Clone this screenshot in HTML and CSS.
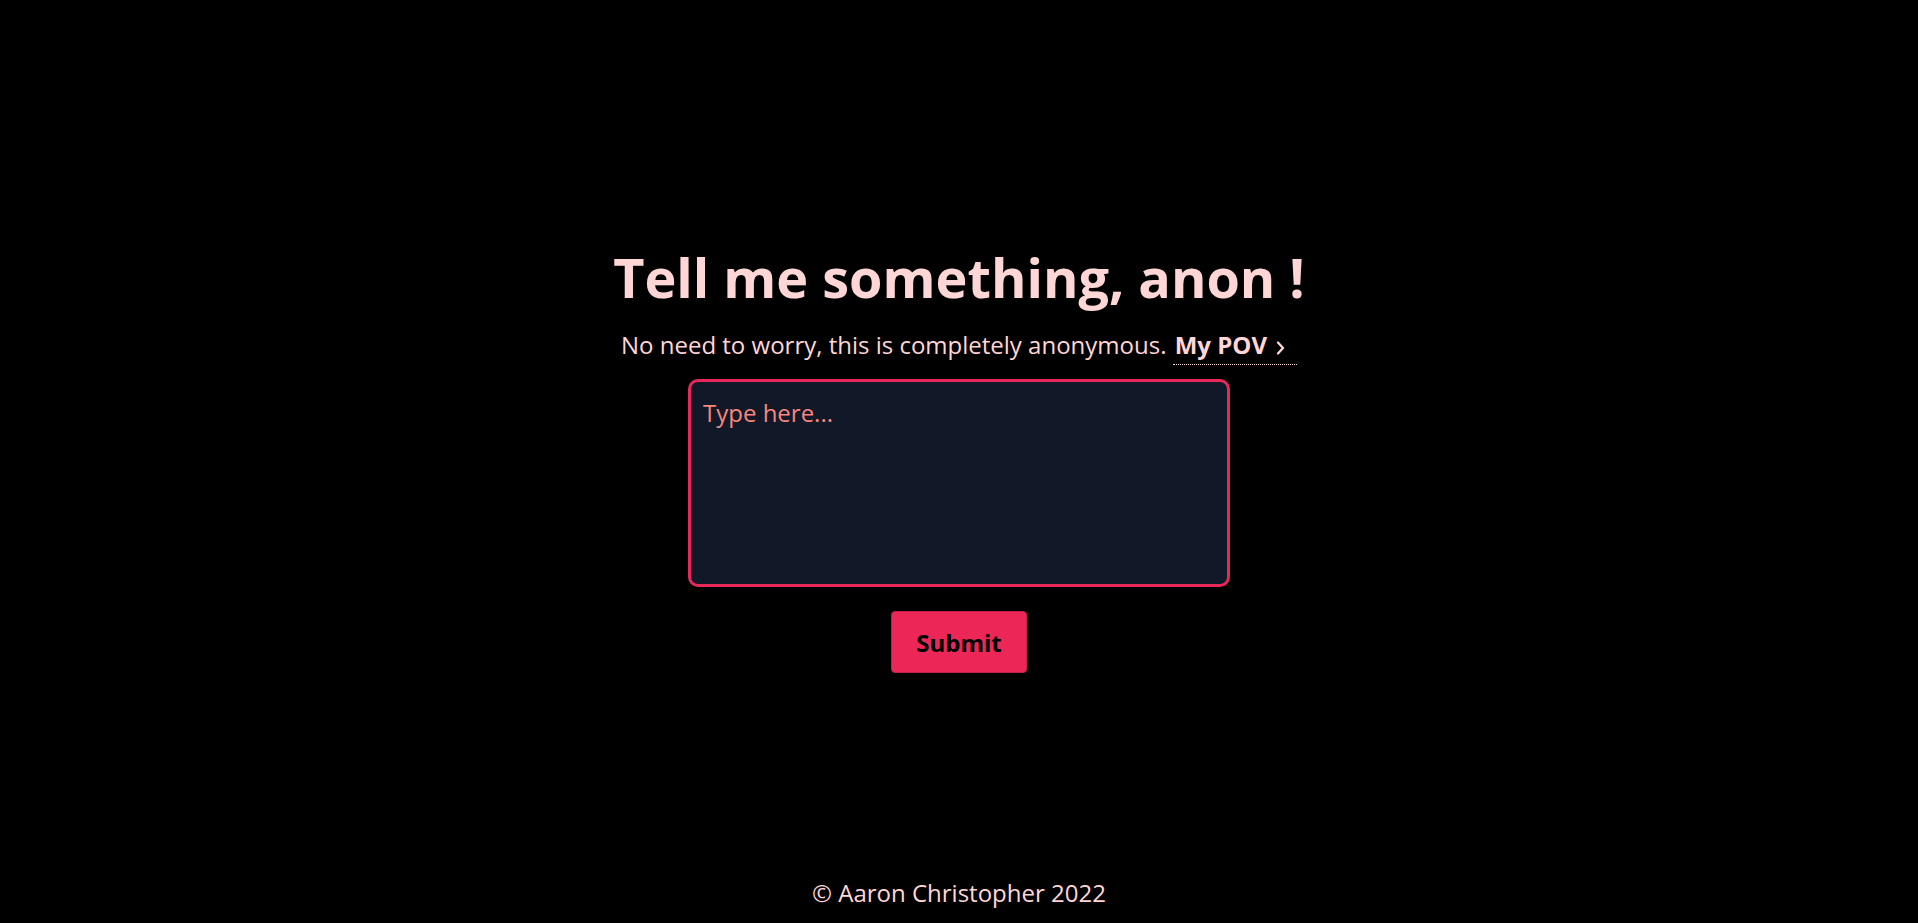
FILE: index.html
```html
<!DOCTYPE html>
<html lang="en">
<head>
<meta charset="utf-8">
<title>Tell me something, anon !</title>
<link rel="stylesheet" href="styles.css">
</head>
<body>
<main class="main">
  <h1 class="title">Tell me something, anon !</h1>
  <p class="subtitle">No need to worry, this is completely anonymous. <a class="pov" href="#">My POV<svg class="chev" width="9" height="14" viewBox="0 0 9 14" aria-hidden="true"><path d="M2 1.5 L7 7 L2 12.5" fill="none" stroke="currentColor" stroke-width="2.3" stroke-linecap="round" stroke-linejoin="round"/></svg></a></p>
  <form class="form">
    <textarea class="box" placeholder="Type here..."></textarea>
    <button class="submit" type="button">Submit</button>
  </form>
</main>
<footer class="footer">© Aaron Christopher 2022</footer>
</body>
</html>
```
FILE: styles.css
```css
html, body {
  margin: 0;
  padding: 0;
  background: #000;
}
body {
  font-family: "Open Sans", "Noto Sans", sans-serif;
  font-size: 24px;
  color: #ffd6d6;
  display: flex;
  flex-direction: column;
  min-height: 923px;
}
.main {
  flex: 1;
  display: flex;
  flex-direction: column;
  align-items: center;
  padding-top: 245px;
}
.title {
  margin: 0;
  font-size: 54px;
  font-weight: 700;
  line-height: 64px;
  color: #ffd6d6;
}
.subtitle {
  margin: 20px 0 0;
  font-size: 24px;
  line-height: 32px;
}
.pov {
  color: #ffd6d6;
  font-weight: 700;
  text-decoration: none;
  border-bottom: 1px dotted #ffd6d6;
  padding: 0 12px 3px 2px;
}
.chev {
  margin-left: 9px;
  vertical-align: -1px;
}
.form {
  display: flex;
  flex-direction: column;
  align-items: center;
  margin-top: 18px;
}
.box {
  box-sizing: border-box;
  width: 542px;
  height: 208px;
  background: #111827;
  border: 3px solid #e8285a;
  border-radius: 10px;
  padding: 15px 12px 9px;
  font-family: inherit;
  font-size: 24px;
  line-height: 32px;
  color: #ffd6d6;
  resize: none;
  outline: none;
}
.box::placeholder {
  color: #f7867e;
}
.submit {
  margin-top: 24px;
  width: 136px;
  height: 62px;
  background: #ec2758;
  border: 1px solid #c21f49;
  border-radius: 4px;
  font-family: inherit;
  font-size: 24px;
  font-weight: 700;
  color: #000;
}
.footer {
  text-align: center;
  font-size: 24px;
  line-height: 32px;
  padding-bottom: 14px;
}
```
